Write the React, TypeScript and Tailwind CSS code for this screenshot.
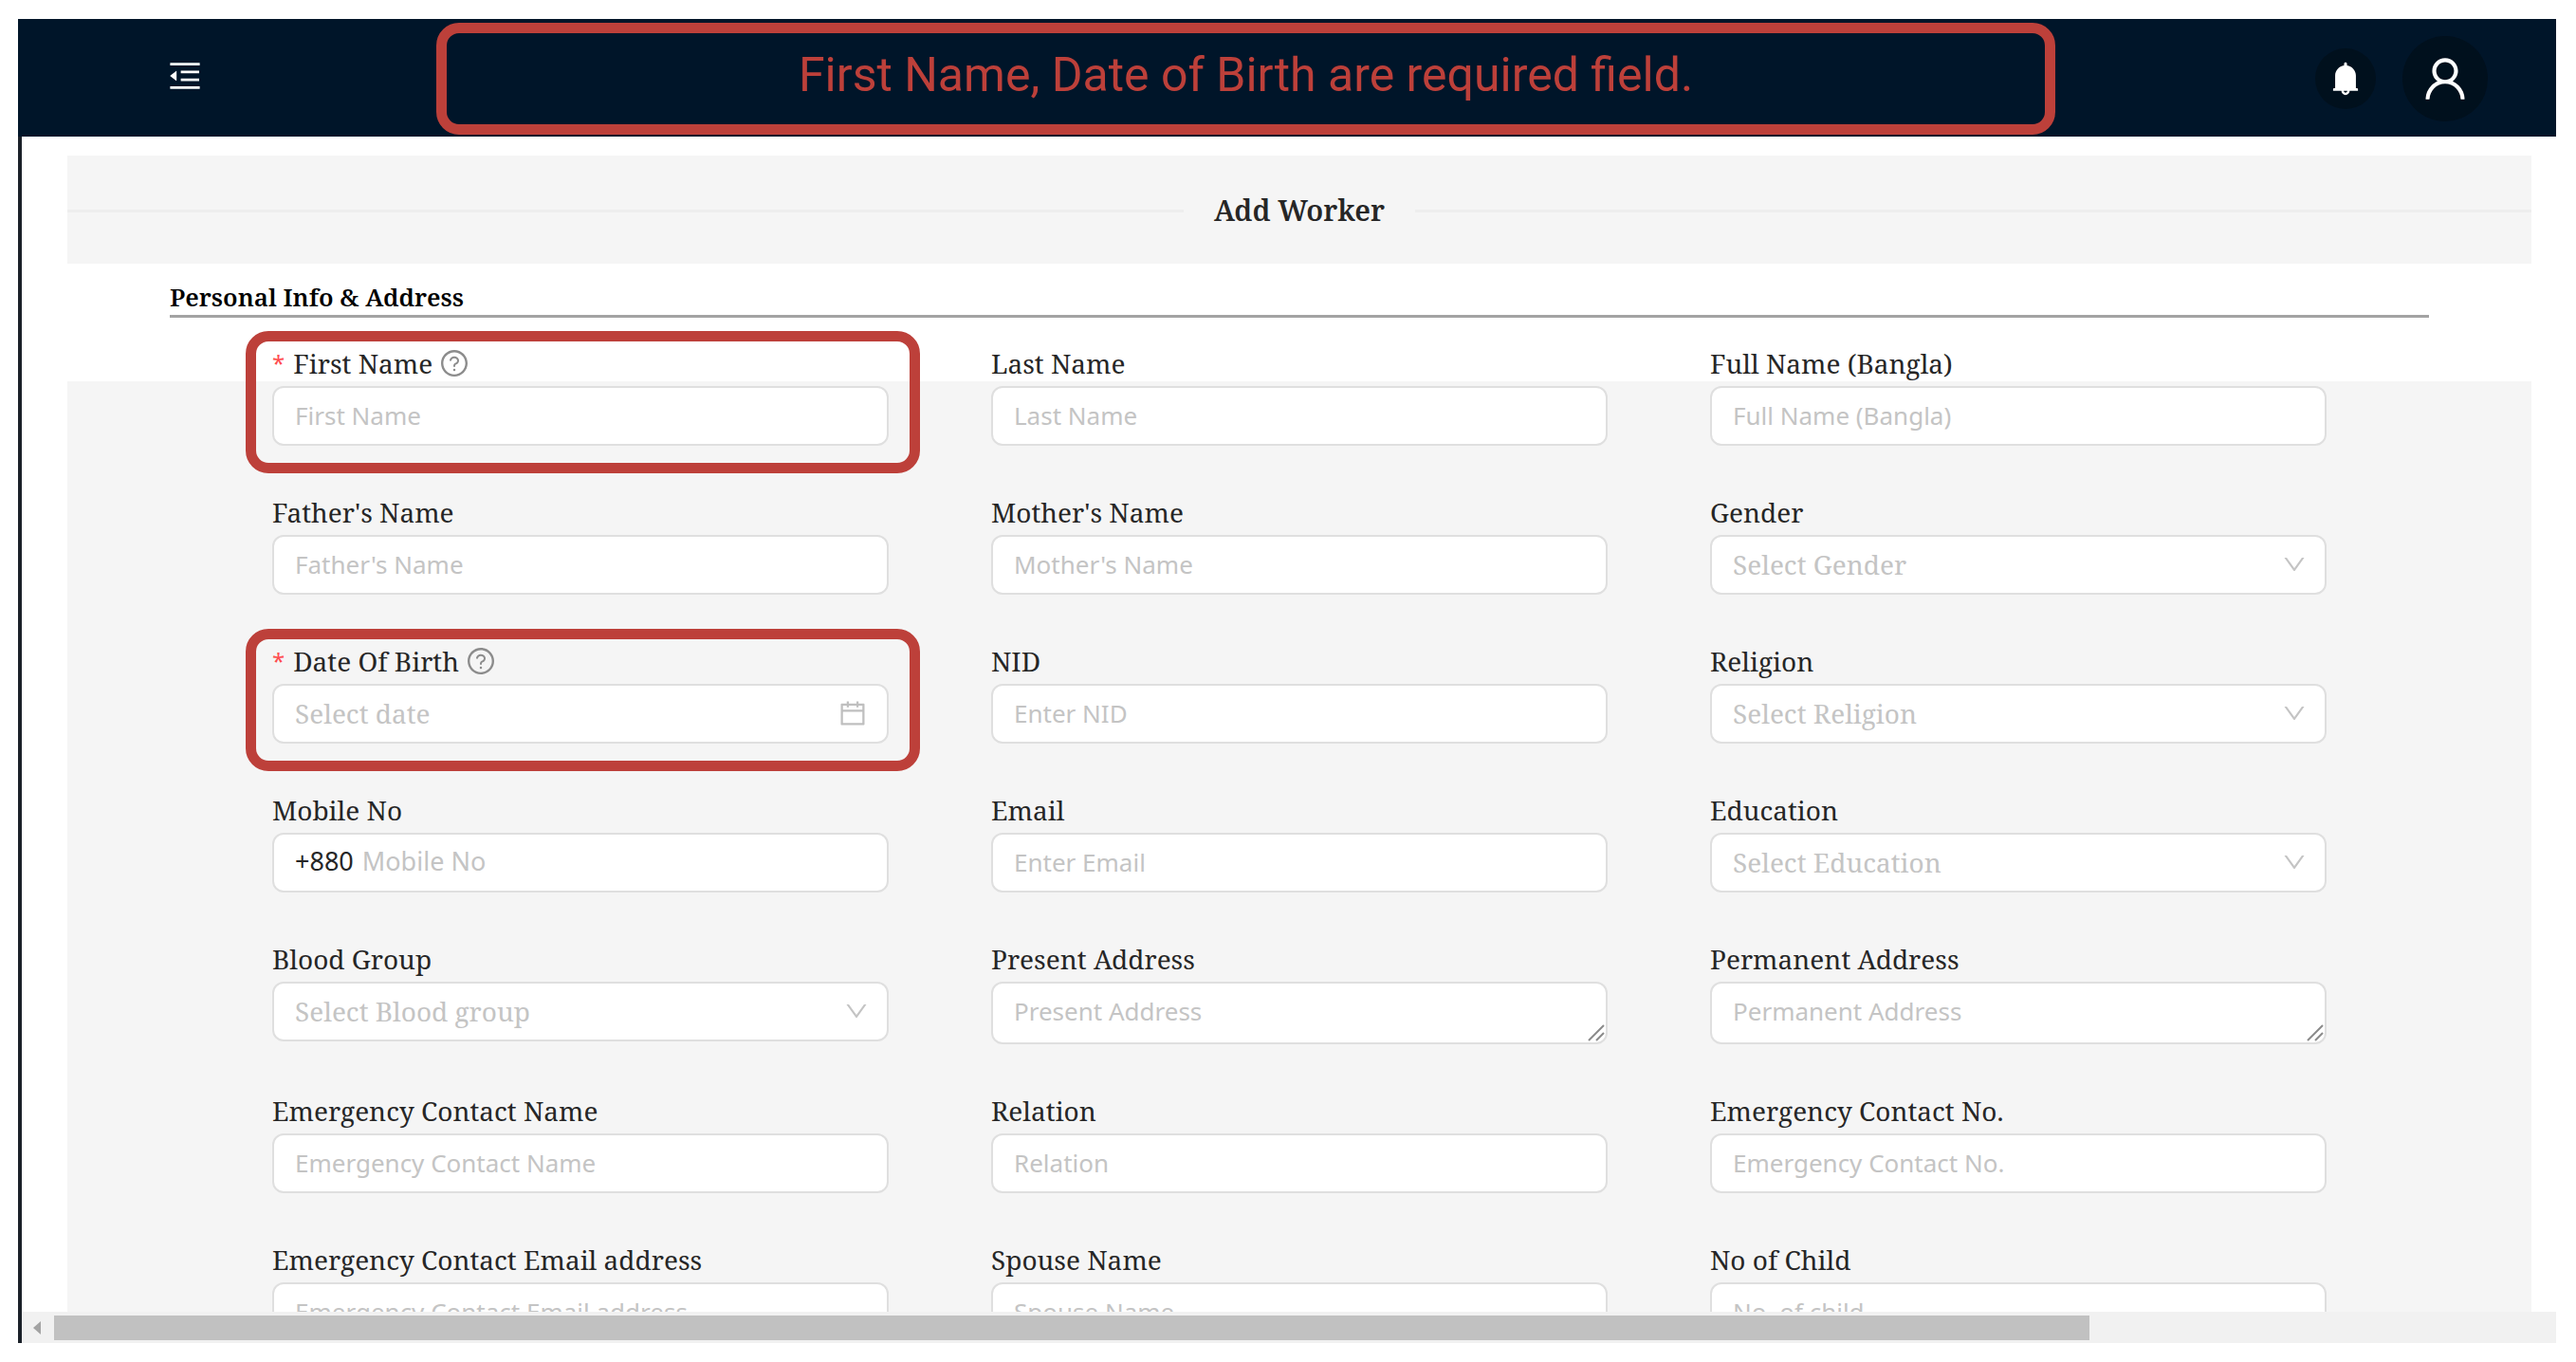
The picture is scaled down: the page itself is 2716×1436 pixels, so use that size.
import React, { useId } from "react";
import {
  AiFillBell,
  AiOutlineCalendar,
  AiOutlineDown,
  AiOutlineMenuFold,
  AiOutlineQuestionCircle,
  AiOutlineUser,
} from "react-icons/ai";

const SANS = "font-['Noto_Sans','Open_Sans',sans-serif]";
const SERIF = "font-['Noto_Serif','DejaVu_Serif_Condensed',serif]";

type FieldKind = "text" | "select" | "date" | "phone" | "area";

interface FieldSpec {
  label: string;
  placeholder: string;
  kind?: FieldKind;
  required?: boolean;
}

const FIELDS: FieldSpec[] = [
  { label: "First Name", placeholder: "First Name", required: true },
  { label: "Last Name", placeholder: "Last Name" },
  { label: "Full Name (Bangla)", placeholder: "Full Name (Bangla)" },
  { label: "Father's Name", placeholder: "Father's Name" },
  { label: "Mother's Name", placeholder: "Mother's Name" },
  { label: "Gender", placeholder: "Select Gender", kind: "select" },
  { label: "Date Of Birth", placeholder: "Select date", kind: "date", required: true },
  { label: "NID", placeholder: "Enter NID" },
  { label: "Religion", placeholder: "Select Religion", kind: "select" },
  { label: "Mobile No", placeholder: "Mobile No", kind: "phone" },
  { label: "Email", placeholder: "Enter Email" },
  { label: "Education", placeholder: "Select Education", kind: "select" },
  { label: "Blood Group", placeholder: "Select Blood group", kind: "select" },
  { label: "Present Address", placeholder: "Present Address", kind: "area" },
  { label: "Permanent Address", placeholder: "Permanent Address", kind: "area" },
  { label: "Emergency Contact Name", placeholder: "Emergency Contact Name" },
  { label: "Relation", placeholder: "Relation" },
  { label: "Emergency Contact No.", placeholder: "Emergency Contact No." },
  { label: "Emergency Contact Email address", placeholder: "Emergency Contact Email address" },
  { label: "Spouse Name", placeholder: "Spouse Name" },
  { label: "No of Child", placeholder: "No. of child" },
];

const BOX = "rounded-xl border-2 border-[#dfdfdf] bg-white";
const INPUT = `h-[63px] w-full px-[22px] pb-[2px] text-[26px] text-[#262626] outline-none placeholder:text-[#c4c4c4] ${SANS}`;

function Control({ id, field }: { id: string; field: FieldSpec }) {
  switch (field.kind) {
    case "select":
      return (
        <div className="relative">
          <select
            id={id}
            defaultValue=""
            className={`h-[63px] w-full appearance-none px-[22px] pb-[2px] text-[28px] text-[#c4c4c4] outline-none ${BOX} ${SERIF}`}
          >
            <option value="">{field.placeholder}</option>
          </select>
          <AiOutlineDown className="pointer-events-none absolute top-[17px] right-5 size-7 text-[#c4c4c4]" />
        </div>
      );
    case "date":
      return (
        <div className={`flex h-[63px] items-center pr-5 pb-[2px] pl-[22px] ${BOX}`}>
          <input
            id={id}
            type="text"
            placeholder={field.placeholder}
            className={`min-w-0 flex-1 text-[28px] outline-none placeholder:text-[#c4c4c4] ${SERIF}`}
          />
          <AiOutlineCalendar className="size-8 text-[#bfbfbf]" />
        </div>
      );
    case "phone":
      return (
        <div className={`flex h-[63px] items-center gap-[9px] px-[22px] pb-[2px] text-[27px] ${BOX} ${SANS}`}>
          <span className="text-[#262626]">+880</span>
          <input
            id={id}
            type="tel"
            placeholder={field.placeholder}
            className="min-w-0 flex-1 outline-none placeholder:text-[#c4c4c4]"
          />
        </div>
      );
    case "area":
      return (
        <div className="relative">
          <textarea
            id={id}
            rows={1}
            placeholder={field.placeholder}
            className={`block h-[66px] w-full resize-none overflow-hidden px-[22px] py-[9px] text-[26px] leading-10 outline-none placeholder:text-[#c4c4c4] ${BOX} ${SANS}`}
          />
          <svg
            viewBox="0 0 18 18"
            aria-hidden="true"
            className="pointer-events-none absolute right-[3px] bottom-[3px] size-[18px] text-[#8a8a8a]"
          >
            <path d="M1 17 17 1M9 17l8-8" stroke="currentColor" strokeWidth="2" fill="none" />
          </svg>
        </div>
      );
    default:
      return <input id={id} type="text" placeholder={field.placeholder} className={`block ${INPUT} ${BOX}`} />;
  }
}

function Field({ field }: { field: FieldSpec }) {
  const id = useId();
  return (
    <div className="relative">
      <div className="mb-1 flex h-10 items-center">
        {field.required && (
          <span className={`mr-[9px] text-[24px] leading-10 text-[#ff4d4f] ${SANS}`} aria-hidden="true">
            *
          </span>
        )}
        <label htmlFor={id} className="text-[28px] leading-10 whitespace-nowrap text-[#262626]">
          {field.label}
        </label>
        {field.required && <AiOutlineQuestionCircle className="ml-[7px] size-8 text-[#8c8c8c]" />}
      </div>
      <Control id={id} field={field} />
      {field.required && (
        <div className="pointer-events-none absolute -top-[14px] -right-[33px] -bottom-[29px] -left-[28px] rounded-3xl border-[11px] border-[#bd403a]" />
      )}
    </div>
  );
}

export default function App() {
  return (
    <div className={`flex h-screen flex-col bg-white pt-5 pr-[21px] pb-5 pl-[19px] ${SERIF}`}>
      <header className="flex h-[124px] shrink-0 items-center bg-[#001529] pt-[2px]">
        <button type="button" aria-label="Collapse menu" className="mb-[6px] ml-[156px] text-white">
          <AiOutlineMenuFold className="size-10" />
        </button>
        <div
          role="alert"
          className="ml-[245px] flex h-[118px] min-w-0 flex-1 items-center justify-center rounded-3xl border-[11px] border-[#bd403a] pb-2 font-[Roboto,sans-serif] text-[50px] leading-[60px] whitespace-nowrap text-[#bd403a]"
        >
          First Name, Date of Birth are required field.
        </div>
        <div className="mr-[72px] ml-[274px] flex items-center gap-7 text-white">
          <button
            type="button"
            aria-label="Notifications"
            className="flex size-16 items-center justify-center rounded-full bg-[#00101d]"
          >
            <AiFillBell className="size-10" />
          </button>
          <button
            type="button"
            aria-label="Account"
            className="flex size-[90px] items-center justify-center rounded-full bg-[#00101d]"
          >
            <AiOutlineUser className="size-14" />
          </button>
        </div>
      </header>

      <div className="flex min-h-0 flex-1 flex-col border-l-4 border-[#1b2129]">
        <main className="min-h-0 flex-1 overflow-hidden pt-5 pr-[26px] pl-12">
          <div className="flex h-[114px] items-center gap-8 bg-[#f5f5f5] pt-[2px]">
            <span className="h-[3px] flex-1 bg-[#eeeeee]" />
            <h1 className="text-[30px] leading-10 font-semibold text-[#262626]">Add Worker</h1>
            <span className="h-[3px] flex-1 bg-[#eeeeee]" />
          </div>
          <form>
            <div className="h-[124px] px-[108px] pt-4">
              <h2 className="border-b-[3px] border-[#a3a3a3] text-[26px] leading-[38px] font-semibold text-black">
                Personal Info &amp; Address
              </h2>
            </div>
            <div className="bg-[#f5f5f5] px-[216px] pb-12">
              <div className="relative -top-[39px] grid grid-cols-3 gap-x-[108px] gap-y-[50px]">
                {FIELDS.map((field) => (
                  <Field key={field.label} field={field} />
                ))}
              </div>
            </div>
          </form>
        </main>
        <div className="flex h-[33px] shrink-0 items-center bg-[#f1f1f1] pl-3">
          <svg viewBox="0 0 8 14" aria-hidden="true" className="mr-[14px] h-[14px] w-2 text-[#a3a3a3]">
            <path d="M8 0v14L0 7z" fill="currentColor" />
          </svg>
          <div className="mr-[492px] h-[26px] flex-1 bg-[#c1c1c1]" />
        </div>
      </div>
    </div>
  );
}
